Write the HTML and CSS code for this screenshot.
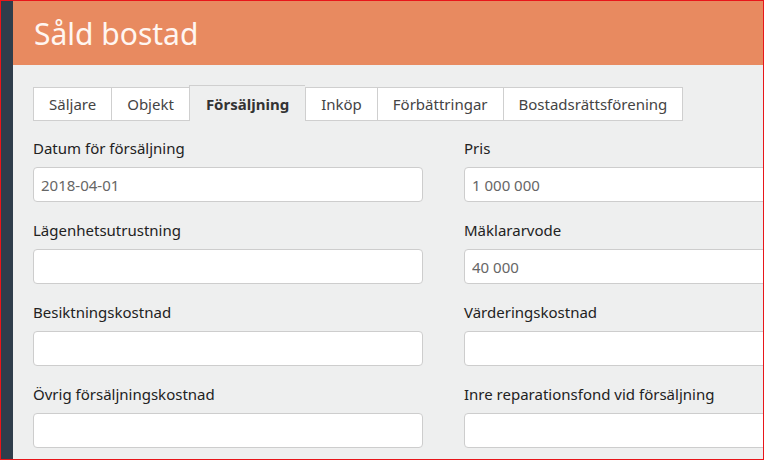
FILE: index.html
```html
<!DOCTYPE html>
<html lang="sv">
<head>
    <meta charset="UTF-8">
    <title>Såld bostad</title>
    <link rel="stylesheet" href="styles.css">
</head>
<body>
    <div class="frame">
        <div class="sidebar"></div>
        <div class="main">
            <div class="header">
                <h1>Såld bostad</h1>
            </div>
            <div class="content">
                <div class="tabs">
                    <div class="tab">Säljare</div>
                    <div class="tab">Objekt</div>
                    <div class="tab active">Försäljning</div>
                    <div class="tab">Inköp</div>
                    <div class="tab">Förbättringar</div>
                    <div class="tab">Bostadsrättsförening</div>
                </div>
                <div class="form">
                    <div class="field">
                        <label for="datum">Datum för försäljning</label>
                        <input type="text" id="datum" value="2018-04-01">
                    </div>
                    <div class="field">
                        <label for="pris">Pris</label>
                        <input type="text" id="pris" value="1 000 000">
                    </div>
                    <div class="field">
                        <label for="utrustning">Lägenhetsutrustning</label>
                        <input type="text" id="utrustning">
                    </div>
                    <div class="field">
                        <label for="arvode">Mäklararvode</label>
                        <input type="text" id="arvode" value="40 000">
                    </div>
                    <div class="field">
                        <label for="besiktning">Besiktningskostnad</label>
                        <input type="text" id="besiktning">
                    </div>
                    <div class="field">
                        <label for="vardering">Värderingskostnad</label>
                        <input type="text" id="vardering">
                    </div>
                    <div class="field">
                        <label for="ovrig">Övrig försäljningskostnad</label>
                        <input type="text" id="ovrig">
                    </div>
                    <div class="field">
                        <label for="fond">Inre reparationsfond vid försäljning</label>
                        <input type="text" id="fond">
                    </div>
                </div>
            </div>
        </div>
    </div>
</body>
</html>
```

FILE: styles.css
```css
* {
    box-sizing: border-box;
    font-family: "Noto Sans", sans-serif;
}
body {
    margin: 0;
    background-color: #fff;
}
.frame {
    display: flex;
    width: 764px;
    height: 460px;
    border: 1px solid #e8161a;
    overflow: hidden;
}
.sidebar {
    width: 12px;
    flex-shrink: 0;
    background-color: #2f3d4b;
}
.main {
    flex: 1;
    background-color: #eeefef;
    min-width: 0;
}
.header {
    height: 64px;
    background-color: #e88a60;
    padding-left: 21px;
    display: flex;
    align-items: center;
}
.header h1 {
    margin: 0;
    font-size: 30px;
    font-weight: 400;
    color: #fff6f1;
}
.content {
    padding: 20px 0 0 20px;
}
.tabs {
    display: flex;
    align-items: flex-end;
    height: 36px;
}
.tab {
    height: 34px;
    padding: 0 15px;
    display: flex;
    align-items: center;
    background-color: #fff;
    border: 1px solid #cfcfcf;
    border-right: none;
    font-size: 15px;
    color: #444;
}
.tab:last-child {
    border-right: 1px solid #cfcfcf;
}
.tab.active {
    height: 36px;
    padding: 0 16px;
    background-color: #eeefef;
    border-bottom: none;
    font-weight: 700;
    color: #333;
}
.tab.active + .tab {
    border-left: 1px solid #cfcfcf;
}
.form {
    display: grid;
    grid-template-columns: 390px 390px;
    column-gap: 41px;
    padding-top: 16px;
    width: 900px;
}
.field {
    display: flex;
    flex-direction: column;
    margin-bottom: 17px;
}
label {
    height: 22px;
    line-height: 22px;
    font-size: 15px;
    color: #222;
    margin-bottom: 8px;
}
input {
    height: 35px;
    border: 1px solid #cdcdcd;
    border-radius: 4px;
    background-color: #fff;
    padding: 0 7px;
    font-size: 15px;
    color: #666;
}
```
